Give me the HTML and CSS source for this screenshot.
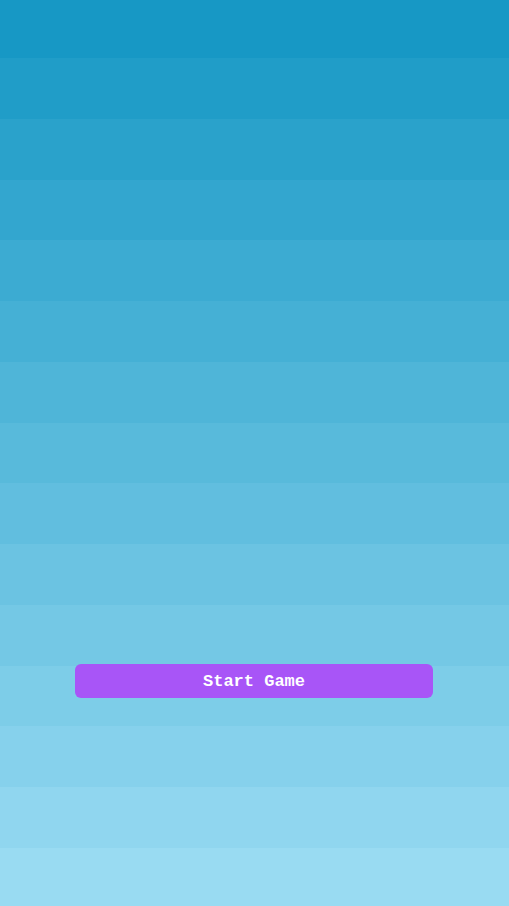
FILE: index.html
```html
<!DOCTYPE html>
<html lang="en">
<head>
<meta charset="utf-8">
<title>Start Game</title>
<link rel="stylesheet" href="styles.css">
</head>
<body>
<main class="screen">
  <button class="start-btn" type="button">Start Game</button>
</main>
</body>
</html>
```
FILE: styles.css
```css
html, body {
  margin: 0;
  padding: 0;
  height: 100%;
}
body {
  font-family: "Liberation Mono", "Courier New", monospace;
}
.screen {
  height: 906px;
  box-sizing: border-box;
  padding: 664px 1px 0 0;
  display: flex;
  flex-direction: column;
  align-items: center;
  background: linear-gradient(to bottom,
    rgb(23,152,197) 0px, rgb(23,152,197) 58px,
    rgb(32,157,200) 58px, rgb(32,157,200) 118.77px,
    rgb(42,162,203) 118.77px, rgb(42,162,203) 179.54px,
    rgb(51,166,207) 179.54px, rgb(51,166,207) 240.31px,
    rgb(60,171,210) 240.31px, rgb(60,171,210) 301.08px,
    rgb(69,176,213) 301.08px, rgb(69,176,213) 361.85px,
    rgb(79,181,216) 361.85px, rgb(79,181,216) 422.62px,
    rgb(88,186,219) 422.62px, rgb(88,186,219) 483.38px,
    rgb(97,190,223) 483.38px, rgb(97,190,223) 544.15px,
    rgb(107,195,226) 544.15px, rgb(107,195,226) 604.92px,
    rgb(116,200,229) 604.92px, rgb(116,200,229) 665.69px,
    rgb(125,205,232) 665.69px, rgb(125,205,232) 726.46px,
    rgb(134,209,236) 726.46px, rgb(134,209,236) 787.23px,
    rgb(144,214,239) 787.23px, rgb(144,214,239) 848px,
    rgb(153,219,242) 848px, rgb(153,219,242) 906px);
}
.start-btn {
  width: 358px;
  height: 34px;
  border: none;
  border-radius: 6px;
  background: #a855f7;
  color: #ffffff;
  font-family: "Liberation Mono", "Courier New", monospace;
  font-weight: bold;
  font-size: 17px;
  padding: 0;
  cursor: pointer;
}
```
